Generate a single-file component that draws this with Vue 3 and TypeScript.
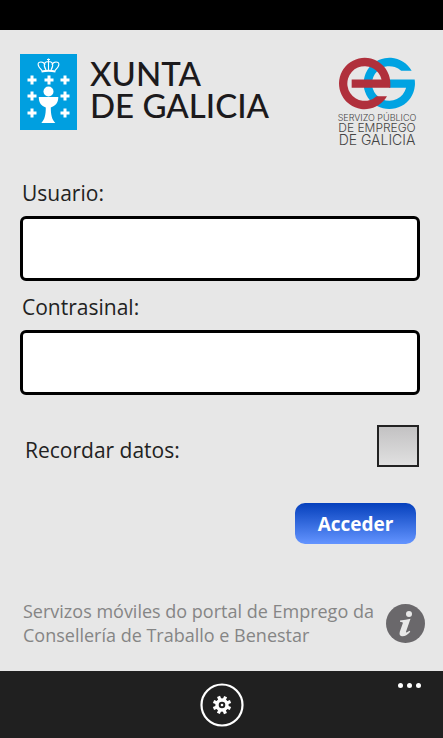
<script setup lang="ts">
import { ref } from 'vue'

const user = ref('')
const password = ref('')
const remember = ref(false)

const crosses: [number, number][] = [
  [12, 26], [29, 26], [45, 26],
  [12, 42], [45, 42],
  [12, 59], [45, 59],
]
</script>

<template>
  <div class="screen">
    <div class="status-bar"></div>

    <main class="content">
      <header class="brands">
        <div class="xunta">
          <svg class="shield" viewBox="0 0 57 76" aria-hidden="true">
            <rect width="57" height="76" fill="#009fe0" />
            <g fill="none" stroke="#fff" stroke-width="1.100">
              <path d="M22 16.500C17 12 17 8 21 8q3 0 4 3M35 16.500c5-4.500 5-8.500 1-8.500q-3 0-4 3M26 16c-3-5-2-8.500 2.500-8.500S34 11 31 16M28.500 4.500V16M27 5.500h3" />
              <path d="M21.500 17.500q7-1.500 14 0" stroke-width="1.800" />
            </g>
            <path
              v-for="([x, y], i) in crosses"
              :key="i"
              :transform="`translate(${x} ${y})`"
              d="M-1.500-4.500h3v3h3v3h-3v3h-3v-3h-3v-3h3z"
              fill="#fff"
            />
            <circle cx="28.500" cy="37.500" r="5" fill="#fff" />
            <path d="M18.800 43h19.500c0 6-3 9-7.500 10.500 0 7 1 12 4.500 15.500h-14c3.500-3.500 4.500-8.500 4.500-15.500-4.500-1.500-7-4.500-7-10.500z" fill="#fff" />
          </svg>
          <div class="xunta-name">
            <span>XUNTA</span>
            <span>DE GALICIA</span>
          </div>
        </div>
        <div class="employment">
          <svg class="eg" viewBox="0 0 228 158" aria-hidden="true">
            <path d="M218 41H186.500A52 52 0 1 0 201.300 92H150V67H227A77 77 0 1 1 218 41Z" fill="#00a3e2" />
            <path d="M154 92H38V67H127.600A52 52 0 1 0 112.500 117H144A77 77 0 1 1 154 79Z" fill="#b0303c" />
          </svg>
          <span class="eg-small">SERVIZO PÚBLICO</span>
          <span class="eg-mid">DE EMPREGO</span>
          <span class="eg-large">DE GALICIA</span>
        </div>
      </header>

      <form class="login" @submit.prevent>
        <label class="label" for="user">Usuario:</label>
        <input id="user" v-model="user" class="field" type="text" autocomplete="username" />
        <label class="label" for="password">Contrasinal:</label>
        <input id="password" v-model="password" class="field" type="password" autocomplete="current-password" />
        <div class="remember">
          <label for="remember">Recordar datos:</label>
          <input id="remember" v-model="remember" class="check" type="checkbox" />
        </div>
        <button class="submit" type="submit">Acceder</button>
      </form>

      <footer class="about">
        <p>Servizos móviles do portal de Emprego da Consellería de Traballo e Benestar</p>
        <button class="info" type="button" aria-label="Información">
          <svg viewBox="0 0 39 39" aria-hidden="true">
            <circle cx="19.500" cy="19.500" r="19.500" fill="#6a686b" />
            <circle cx="23" cy="10" r="3" fill="#e8e8e8" />
            <path d="M14 16.500q6-.5 10.500-1.800l-4.500 13q-.5 2 3.500-1l.8 1q-4.500 5-8.500 4.500-3-.5-2-4.500l3-8.500q.3-1.500-2.800-1.500z" fill="#e8e8e8" />
          </svg>
        </button>
      </footer>
    </main>

    <nav class="app-bar">
      <button class="settings" type="button" aria-label="Axustes">
        <svg viewBox="-22 -22 44 44" aria-hidden="true">
          <circle r="20.500" fill="none" stroke="#fff" stroke-width="2.200" />
          <circle r="5" fill="none" stroke="#fff" stroke-width="3.400" />
          <g fill="#fff">
            <rect v-for="n in 8" :key="n" x="-1.600" y="-9.200" width="3.200" height="4" :transform="`rotate(${n * 45 - 22})`" />
            <circle r="1.300" />
          </g>
        </svg>
      </button>
      <button class="more" type="button" aria-label="Máis">
        <i></i><i></i><i></i>
      </button>
    </nav>
  </div>
</template>

<style>
body {
  margin: 0;
  background: #e7e7e7;
}
</style>

<style scoped>
.screen {
  box-sizing: border-box;
  min-height: 100vh;
  display: flex;
  flex-direction: column;
  background: #e7e7e7;
  color: #222;
  font-family: "Open Sans", "Noto Sans", sans-serif;
  font-size: 21px;
  line-height: 28px;
}
.screen * {
  box-sizing: border-box;
}
button {
  padding: 0;
  border: 0;
  background: none;
  font: inherit;
}
svg {
  display: block;
}
.status-bar {
  height: 30px;
  background: #000;
}
.content {
  flex: 1;
  display: flex;
  flex-direction: column;
  padding: 24px 23px 24px 20px;
}
.brands {
  display: flex;
  justify-content: space-between;
  padding-right: 5px;
}
.xunta {
  display: flex;
  gap: 13px;
}
.shield {
  width: 57px;
  height: 76px;
}
.xunta-name {
  display: flex;
  flex-direction: column;
  padding-top: 3px;
  font-family: Lato, sans-serif;
  font-size: 33px;
  line-height: 32px;
  font-weight: 500;
  color: #1c1a1c;
  white-space: nowrap;
}
.employment {
  display: flex;
  flex-direction: column;
  align-items: center;
  width: 76px;
  padding-top: 3px;
  font-family: Inter, "Liberation Sans", sans-serif;
  font-weight: 300;
  color: #444;
  white-space: nowrap;
}
.eg {
  width: 76px;
  height: 53px;
  margin-bottom: 3px;
}
.eg-small {
  font-size: 9px;
  line-height: 9px;
}
.eg-mid {
  font-size: 12px;
  line-height: 12px;
}
.eg-large {
  font-size: 14px;
  line-height: 12px;
}
.login {
  display: flex;
  flex-direction: column;
  padding-top: 33px;
}
.label {
  padding: 0 2px;
  margin-bottom: 9px;
}
.field {
  width: 100%;
  height: 65px;
  margin: 0 0 12px;
  padding: 0 12px;
  border: 3px solid #000;
  border-radius: 6px;
  background: #fff;
  font: inherit;
}
.remember {
  display: flex;
  align-items: center;
  justify-content: space-between;
  margin-top: 18px;
  padding: 0 1px 0 5px;
}
.remember label {
  padding-top: 8px;
}
.check {
  appearance: none;
  width: 42px;
  height: 42px;
  margin: 0;
  border: 2px solid #222;
  background: linear-gradient(#c3c2c3, #e0e0e0);
}
.check:checked {
  background: #1a56cc;
}
.submit {
  align-self: flex-end;
  width: 121px;
  height: 41px;
  margin: 36px 4px 0 0;
  border-radius: 10px;
  background: linear-gradient(#0540bc, #6394ff);
  color: #fff;
  font-size: 19px;
  font-weight: 700;
}
.about {
  display: flex;
  align-items: center;
  justify-content: space-between;
  gap: 8px;
  margin: auto -5px 0 3px;
  color: #858585;
  font-size: 18px;
  line-height: 24px;
}
.about p {
  flex: 1;
  margin: 0;
}
.info {
  width: 39px;
  height: 39px;
}
.app-bar {
  display: grid;
  grid-template-columns: 1fr auto 1fr;
  height: 67px;
  background: #202020;
}
.settings {
  grid-column: 2;
  align-self: center;
  width: 44px;
  height: 44px;
}
.more {
  justify-self: end;
  align-self: start;
  display: flex;
  gap: 4px;
  padding: 12px 22px;
}
.more i {
  width: 5px;
  height: 5px;
  border-radius: 50%;
  background: #fff;
}
</style>
